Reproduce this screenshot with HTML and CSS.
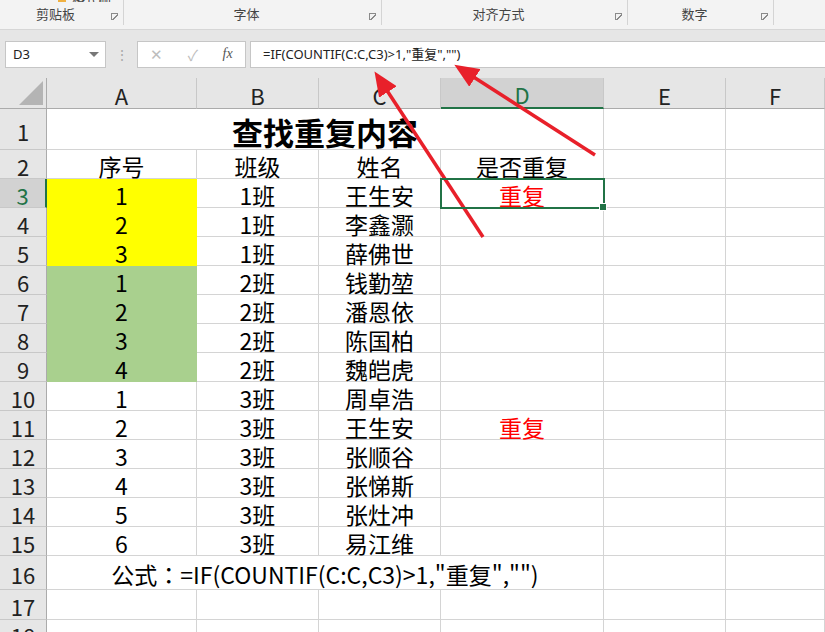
FILE: index.html
```html
<!DOCTYPE html>
<html lang="zh-CN">
<head>
  <meta charset="UTF-8" />
  <title>查找重复内容</title>
  <link rel="stylesheet" href="styles.css">
</head>
<body>
<div class="ribbon">
  <div class="group g1">
    <div class="peek"><span class="brush"></span>格式刷</div>
    <div class="glabel"><span>剪贴板</span><i class="launch"></i></div>
  </div>
  <div class="group g2">
    <div class="peek"></div>
    <div class="glabel"><span>字体</span><i class="launch"></i></div>
  </div>
  <div class="group g3">
    <div class="peek"></div>
    <div class="glabel"><span>对齐方式</span><i class="launch"></i></div>
  </div>
  <div class="group g4">
    <div class="peek"></div>
    <div class="glabel"><span>数字</span><i class="launch"></i></div>
  </div>
  <div class="group g5"></div>
</div>

<div class="fbar">
  <div class="namebox">D3<span class="drop"></span></div>
  <div class="dots">⋮</div>
  <div class="btns">
    <span class="x">✕</span>
    <span class="ok">✓</span>
    <span class="fx">fx</span>
  </div>
  <div class="formula">=IF(COUNTIF(C:C,C3)&gt;1,"重复","")</div>
</div>

<div class="sheet" id="sheet"></div>

<svg class="arrows" width="825" height="632" viewBox="0 0 825 632">
  <defs>
    <marker id="head" markerWidth="7" markerHeight="6" refX="1" refY="3" orient="auto" markerUnits="strokeWidth">
      <path d="M0,0 L7,3 L0,6 Z" fill="#e8202a"/>
    </marker>
  </defs>
  <line x1="483" y1="237" x2="386" y2="89" stroke="#e8202a" stroke-width="3.5" marker-end="url(#head)"/>
  <line x1="595" y1="155" x2="472" y2="76" stroke="#e8202a" stroke-width="3.5" marker-end="url(#head)"/>
</svg>

<script>
  const sheet = document.getElementById("sheet");

  // 每行：序号, 填充色, 班级, 姓名, 是否重复
  const rows = [
    ["1", "y", "1班", "王生安", "重复"],
    ["2", "y", "1班", "李鑫灏", ""],
    ["3", "y", "1班", "薛佛世", ""],
    ["1", "g", "2班", "钱勤堃", ""],
    ["2", "g", "2班", "潘恩依", ""],
    ["3", "g", "2班", "陈国柏", ""],
    ["4", "g", "2班", "魏皑虎", ""],
    ["1", "", "3班", "周卓浩", ""],
    ["2", "", "3班", "王生安", "重复"],
    ["3", "", "3班", "张顺谷", ""],
    ["4", "", "3班", "张悌斯", ""],
    ["5", "", "3班", "张灶冲", ""],
    ["6", "", "3班", "易江维", ""]
  ];

  function cell(text, cls, span) {
    const div = document.createElement("div");
    div.className = "cell" + (cls ? " " + cls : "");
    if (span) div.style.gridColumn = "span " + span;
    div.textContent = text || "";
    sheet.appendChild(div);
    return div;
  }

  // 列标题
  const corner = cell("", "head corner");
  corner.innerHTML = '<svg width="24" height="24" viewBox="0 0 24 24"><path d="M24 0 L24 24 L0 24 Z" fill="#b4b4b4"/></svg>';
  ["A", "B", "C", "D", "E", "F"].forEach(c => cell(c, "head col" + (c === "D" ? " on" : "")));

  // 第 1 行 标题
  cell("1", "rh");
  cell("查找重复内容", "title", 4);
  cell(""); cell("");

  // 第 2 行 表头
  cell("2", "rh");
  ["序号", "班级", "姓名", "是否重复", "", ""].forEach(t => cell(t));

  rows.forEach((r, i) => {
    const n = i + 3;
    cell(String(n), "rh" + (n === 3 ? " on" : ""));
    cell(r[0], r[1] === "y" ? "yellow" : r[1] === "g" ? "green" : "");
    cell(r[2]);
    cell(r[3]);
    cell(r[4], "red" + (n === 3 ? " sel" : ""));
    cell(""); cell("");
  });

  // 第 16 行 公式说明
  cell("16", "rh");
  const note = cell("", "note", 4);
  note.innerHTML = '公式<span class="colon">：</span>=IF(COUNTIF(C:C,C3)&gt;1,"重复","")';
  cell(""); cell("");

  [17, 18].forEach(n => {
    cell(String(n), "rh");
    for (let k = 0; k < 6; k++) cell("");
  });
</script>
</body>
</html>
```

FILE: styles.css
```css
body {
  margin: 0;
  width: 825px;
  height: 632px;
  overflow: hidden;
  position: relative;
  background: #e6e6e6;
  font-family: "Noto Sans", "Noto Sans CJK SC", sans-serif;
}

/* 功能区 */
.ribbon {
  display: flex;
  height: 29px;
  background: #f3f3f3;
  border-bottom: 1px solid #d6d6d6;
  overflow: hidden;
}
.group {
  display: flex;
  flex-direction: column;
  height: 25px;
  border-right: 1px solid #d4d4d4;
}
.g1 { width: 123px; }
.g2 { width: 257px; }
.g3 { width: 245px; }
.g4 { width: 145px; }
.g5 { flex: 1; border-right: none; }
.peek {
  height: 10px;
  margin-top: -8px;
  padding-left: 58px;
  font-size: 13px;
  line-height: 14px;
  color: #444;
  overflow: hidden;
}
.brush {
  display: inline-block;
  width: 8px;
  height: 6px;
  margin-right: 6px;
  background: #f0b040;
}
.glabel {
  display: flex;
  align-items: center;
  height: 22px;
  margin-top: 1px;
  font-family: "Noto Sans CJK SC", sans-serif;
  font-size: 13px;
  line-height: 16px;
  color: #444;
}
.glabel span {
  flex: 1;
  text-align: center;
}
.launch {
  width: 6px;
  height: 6px;
  margin: 4px 5px 0 0;
  border-left: 1px solid #8a8a8a;
  border-top: 1px solid #8a8a8a;
  background: linear-gradient(135deg, transparent 45%, #8a8a8a 45%, #8a8a8a 60%, transparent 60%);
}

/* 编辑栏 */
.fbar {
  display: flex;
  align-items: center;
  height: 48px;
  padding-left: 5px;
  box-sizing: border-box;
}
.namebox {
  display: flex;
  align-items: center;
  justify-content: space-between;
  width: 101px;
  height: 27px;
  box-sizing: border-box;
  padding: 0 6px 0 7px;
  background: #fff;
  border: 1px solid #c6c6c6;
  font-size: 13px;
  color: #222;
}
.drop {
  width: 0;
  height: 0;
  border-left: 5px solid transparent;
  border-right: 5px solid transparent;
  border-top: 5px solid #777;
}
.dots {
  width: 31px;
  text-align: center;
  color: #aaa;
  font-size: 14px;
}
.btns {
  display: flex;
  align-items: center;
  justify-content: space-around;
  width: 109px;
  height: 27px;
  box-sizing: border-box;
  background: #fff;
  border: 1px solid #c6c6c6;
  font-size: 15px;
  color: #bdbdbd;
}
.btns .fx {
  font-family: "Liberation Serif", serif;
  font-style: italic;
  font-size: 14px;
  color: #555;
}
.formula {
  flex: 1;
  height: 27px;
  margin-left: 4px;
  box-sizing: border-box;
  padding-left: 12px;
  line-height: 25px;
  background: #fff;
  border: 1px solid #c6c6c6;
  border-right: none;
  font-family: "Noto Sans", "Noto Sans CJK SC", sans-serif;
  font-size: 13px;
  color: #222;
}

/* 表格 */
.sheet {
  display: grid;
  grid-template-columns: 47px 150px 122px 122px 163px 122px 1fr;
  grid-template-rows: 31px 41px repeat(14, 29px) 34px 30px 1fr;
  height: 554px;
  background: #fff;
  font-family: "Noto Sans CJK SC", sans-serif;
}
.cell {
  display: flex;
  align-items: center;
  justify-content: center;
  box-sizing: border-box;
  padding-top: 3px;
  border-right: 1px solid #d4d4d4;
  border-bottom: 1px solid #d4d4d4;
  font-size: 23px;
  line-height: 24px;
  color: #000;
  white-space: nowrap;
}
.head {
  background: #e6e6e6;
  border-right-color: #c8c8c8;
  border-bottom-color: #ababab;
  font-size: 22px;
  color: #222;
}
.corner {
  justify-content: flex-end;
  align-items: flex-end;
  padding: 0 3px 3px 0;
  border-right-color: #ababab;
}
.head.on {
  background: #d2d2d2;
  color: #217346;
  border-bottom: 2px solid #217346;
}
.rh {
  background: #e6e6e6;
  border-right-color: #ababab;
  border-bottom-color: #c8c8c8;
  font-size: 22px;
  color: #222;
}
.rh.on {
  background: #d2d2d2;
  color: #217346;
  border-right: 2px solid #217346;
}
.title {
  font-size: 31px;
  line-height: 34px;
  font-weight: bold;
  padding-top: 6px;
}
.yellow {
  background: #ffff00;
  border-color: #ffff00;
}
.green {
  background: #a9d08e;
  border-color: #a9d08e;
}
.red {
  color: #ff0000;
}
.sel {
  position: relative;
  z-index: 1;
  outline: 2px solid #217346;
  outline-offset: -1px;
}
.sel::after {
  content: "";
  position: absolute;
  right: -4px;
  bottom: -4px;
  width: 6px;
  height: 6px;
  background: #217346;
  border: 1px solid #fff;
}
.note {
  justify-content: center;
}
.note .colon {
  font-family: "Noto Sans CJK JP", sans-serif;
}

.arrows {
  position: absolute;
  top: 0;
  left: 0;
  pointer-events: none;
}
```
